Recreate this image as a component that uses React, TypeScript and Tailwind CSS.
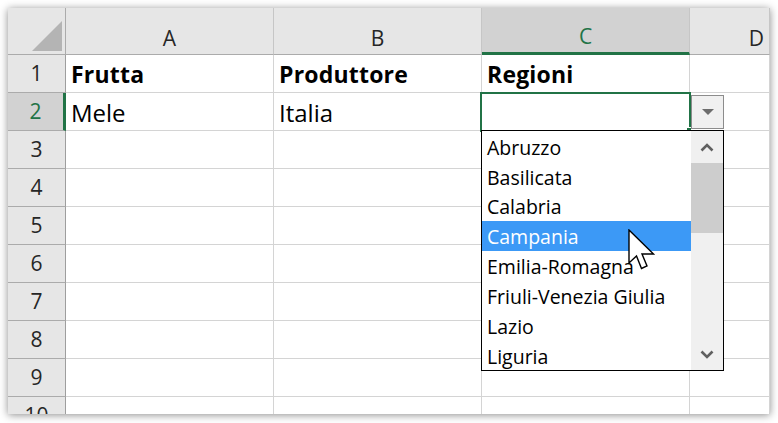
const cols = ['A', 'B', 'C', 'D'];
const rowNums = [1, 2, 3, 4, 5, 6, 7, 8, 9, 10];

const data: Record<number, string[]> = {
  1: ['Frutta', 'Produttore', 'Regioni', ''],
  2: ['Mele', 'Italia', '', ''],
};

const regioni = [
  'Abruzzo',
  'Basilicata',
  'Calabria',
  'Campania',
  'Emilia-Romagna',
  'Friuli-Venezia Giulia',
  'Lazio',
  'Liguria',
];

const ui = { fontFamily: '"Open Sans", "Noto Sans", sans-serif' };

export default function App() {
  return (
    <div className="w-[778px] h-[423px] bg-white pt-[8px] pl-[8px] overflow-hidden">
      <div
        className="relative w-[762px] h-[406px] overflow-hidden bg-white shadow-[0_1px_8px_rgba(0,0,0,0.45)]"
        style={ui}
      >
        {/* sheet grid */}
        <div className="grid grid-cols-[58px_208px_208px_208px_80px] grid-rows-[47px_repeat(10,38px)]">
          {/* corner */}
          <div className="bg-[#e6e6e6] border-r border-b border-[#ababab] flex items-end justify-end pr-[3px] pb-[3px]">
            <svg width="30" height="30" viewBox="0 0 30 30">
              <polygon points="30,0 30,30 0,30" fill="#b4b4b4" />
            </svg>
          </div>
          {cols.map((c) => (
            <div
              key={c}
              className={`flex items-end pb-[5px] border-b text-[21px] leading-none ${
                c === 'D' ? 'justify-end pr-[5px]' : 'justify-center'
              } ${
                c === 'C'
                  ? 'bg-[#d2d2d2] text-[#217346] border-b-[3px] border-b-[#217346] border-r border-r-[#c6c6c6]'
                  : 'bg-[#e6e6e6] text-[#262626] border-b-[#ababab] border-r border-r-[#c6c6c6]'
              }`}
            >
              {c}
            </div>
          ))}

          {rowNums.map((r) => (
            <Row key={r} r={r} />
          ))}
        </div>

        {/* active cell C2 */}
        <div className="absolute left-[472px] top-[84px] w-[211px] h-[40px] border-2 border-[#217346]" />
        <div className="absolute left-[678px] top-[119px] w-[6px] h-[6px] bg-[#217346] border border-white" />

        {/* dropdown button */}
        <div className="absolute left-[683px] top-[87px] w-[33px] h-[34px] bg-[#f0f0f0] border border-[#8c8c8c] flex items-center justify-center">
          <svg width="12" height="7" viewBox="0 0 12 7">
            <polygon points="0,0 12,0 6,6" fill="#6d6d6d" />
          </svg>
        </div>

        {/* dropdown list */}
        <div className="absolute left-[473px] top-[122px] w-[243px] h-[241px] bg-white border border-black flex">
          <div className="w-[209px] flex flex-col text-[19.5px] text-black">
            {regioni.map((r) => (
              <div
                key={r}
                className={`h-[30px] pl-[5px] pt-[3px] flex items-center leading-none whitespace-nowrap ${
                  r === 'Campania' ? 'bg-[#3c99f6] text-white' : ''
                }`}
              >
                {r}
              </div>
            ))}
          </div>
          <div className="flex-1 bg-[#f0f0f0] flex flex-col">
            <div className="h-[32px] flex items-center justify-center">
              <svg width="14" height="9" viewBox="0 0 14 9">
                <polyline points="1.5,7.5 7,2 12.5,7.5" fill="none" stroke="#606060" strokeWidth="2.6" />
              </svg>
            </div>
            <div className="h-[70px] bg-[#cdcdcd]" />
            <div className="flex-1" />
            <div className="h-[32px] flex items-center justify-center">
              <svg width="14" height="9" viewBox="0 0 14 9">
                <polyline points="1.5,1.5 7,7 12.5,1.5" fill="none" stroke="#606060" strokeWidth="2.6" />
              </svg>
            </div>
          </div>
        </div>

        {/* mouse pointer */}
        <svg
          className="absolute left-[620px] top-[221px]"
          width="30"
          height="44"
          viewBox="0 0 30 44"
        >
          <path
            d="M1 1 V34 L8.5 27 L13.5 39.5 L19 37 L14 25 L25.5 25 Z"
            fill="white"
            stroke="black"
            strokeWidth="1.4"
            strokeLinejoin="miter"
          />
        </svg>
      </div>
    </div>
  );
}

function Row({ r }: { r: number }) {
  const active = r === 2;
  const values = data[r] ?? ['', '', '', ''];
  return (
    <>
      <div
        className={`flex items-center justify-center text-[21px] leading-none border-b ${
          active
            ? 'bg-[#d2d2d2] text-[#217346] border-b-[#ababab] border-r-[3px] border-r-[#217346]'
            : 'bg-[#e6e6e6] text-[#262626] border-b-[#ababab] border-r border-r-[#9e9e9e]'
        }`}
      >
        {r}
      </div>
      {values.map((v, i) => (
        <div
          key={i}
          className={`border-r border-b border-[#d4d4d4] flex items-center pl-[5px] pt-[2px] whitespace-nowrap text-black ${
            r === 1 ? 'font-bold text-[23px] tracking-[0.2px]' : 'text-[24px]'
          }`}
        >
          {v}
        </div>
      ))}
    </>
  );
}
